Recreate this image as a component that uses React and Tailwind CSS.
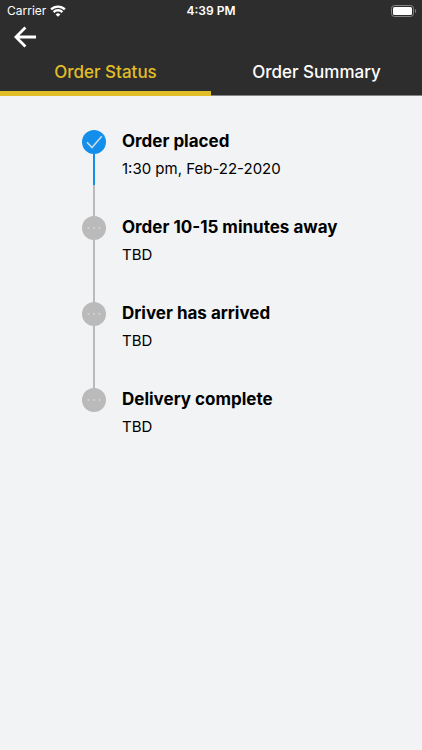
import React, { useState } from 'react'

const steps = [
  { title: 'Order placed', time: '1:30 pm, Feb-22-2020', done: true },
  { title: 'Order 10-15 minutes away', time: 'TBD', done: false },
  { title: 'Driver has arrived', time: 'TBD', done: false },
  { title: 'Delivery complete', time: 'TBD', done: false },
]

const tabs = ['Order Status', 'Order Summary']

function WifiIcon(){
  return (
    <svg width="16" height="12" viewBox="0 0 16 12" fill="none" stroke="#fff" strokeWidth="2.3" aria-hidden="true">
      <path d="M1.1 4.4a9.8 9.8 0 0 1 13.8 0" />
      <path d="M3.6 7.1a6.2 6.2 0 0 1 8.8 0" />
      <path d="M8 11.8 5.6 9.4a3.3 3.3 0 0 1 4.8 0z" fill="#fff" stroke="none" />
    </svg>
  )
}

function BatteryIcon(){
  return (
    <svg width="26" height="12" viewBox="0 0 26 12" aria-hidden="true">
      <rect x="0.5" y="0.5" width="22" height="11" rx="3" fill="none" stroke="#858585" />
      <rect x="2" y="2" width="19" height="8" rx="1.5" fill="#fff" />
      <path d="M24 4v4c1.6-.7 1.6-3.3 0-4z" fill="#858585" />
    </svg>
  )
}

function StatusBar(){
  return (
    <div className="grid grid-cols-3 items-center h-[22px] px-[7px] text-white">
      <div className="flex items-center gap-1 text-xs">
        <span>Carrier</span>
        <WifiIcon />
      </div>
      <div className="text-center text-xs font-semibold">4:39 PM</div>
      <div className="flex justify-end -mr-0.5"><BatteryIcon /></div>
    </div>
  )
}

function StepMarker({ done }){
  return (
    <svg className="block shrink-0" width="24" height="24" viewBox="0 0 24 24" aria-hidden="true">
      <circle cx="12" cy="12" r="12" fill={done ? '#138eea' : '#bababa'} />
      {done ? (
        <path d="M5 12.2 10 17.6 19.8 6.2" fill="none" stroke="#c9dceb" strokeWidth="1.6" />
      ) : (
        <g fill="#d2d2d2">
          <circle cx="6.5" cy="12" r="1.1" />
          <circle cx="12" cy="12" r="1.1" />
          <circle cx="17.5" cy="12" r="1.1" />
        </g>
      )}
    </svg>
  )
}

function Step({ step, last }){
  return (
    <li className="flex gap-4 min-h-[86px]">
      <div className="flex flex-col items-center">
        <StepMarker done={step.done} />
        {!last && (
          <>
            <div className={step.done ? 'flex-1 w-0.5 bg-[#138eea]' : 'flex-1 w-0.5 bg-[#bababa]'} />
            <div className="flex-1 w-0.5 bg-[#bababa]" />
          </>
        )}
      </div>
      <div className="text-black">
        <h2 className="text-[17px] leading-[22px] font-bold">{step.title}</h2>
        <p className="mt-1.5 text-[15px] leading-[22px]">{step.time}</p>
      </div>
    </li>
  )
}

export default function App(){
  const [active, setActive] = useState('Order Status')

  return (
    <div className="min-h-screen bg-[#f2f3f5] font-['Inter',sans-serif]">
      <header className="bg-[#2d2d2d]">
        <StatusBar />
        <button type="button" aria-label="Back" className="block ml-3 px-0.5 py-1 text-white">
          <svg width="22" height="22" viewBox="0 0 22 22" fill="none" stroke="currentColor" strokeWidth="2.8" aria-hidden="true">
            <path d="M11.4 1.4 1.9 11l9.5 9.6M2 11h20" />
          </svg>
        </button>
        <div role="tablist" className="grid grid-cols-2">
          {tabs.map(tab => (
            <button
              key={tab}
              type="button"
              role="tab"
              aria-selected={active === tab}
              onClick={() => setActive(tab)}
              className={
                active === tab
                  ? 'h-11 pt-0.5 text-[17px] font-medium text-[#e1be28] border-b-5 border-[#e1be28]'
                  : 'h-11 pt-0.5 pb-1 text-[17px] font-medium text-white border-b border-[#858585]'
              }
            >
              {tab}
            </button>
          ))}
        </div>
      </header>

      <main className="pt-[34px] px-4">
        <ol className="ml-[66px]">
          {steps.map((step, i) => (
            <Step key={step.title} step={step} last={i === steps.length - 1} />
          ))}
        </ol>
      </main>
    </div>
  )
}
